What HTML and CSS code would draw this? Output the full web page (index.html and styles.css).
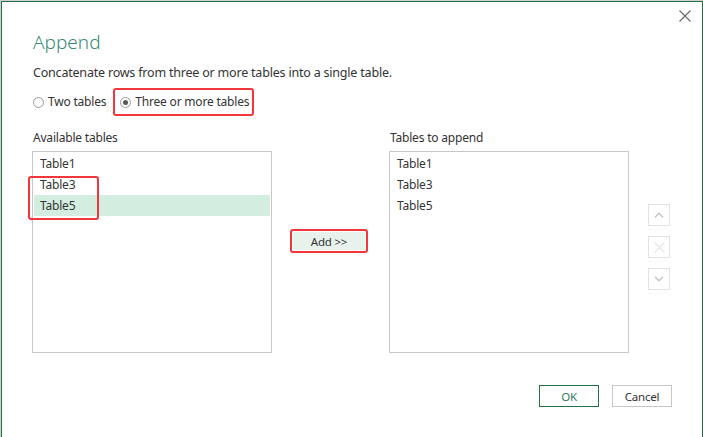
FILE: index.html
```html
<!DOCTYPE html>
<html>
<head>
<meta charset="utf-8">
<link rel="stylesheet" href="styles.css">
</head>
<body>
<div class="dialog">
  <button class="close" aria-label="Close">
    <svg width="12" height="12" viewBox="0 0 12 12"><path d="M0.5 0.5 L11.5 11.5 M11.5 0.5 L0.5 11.5" stroke="#6a6a6a" stroke-width="1.2" fill="none"/></svg>
  </button>
  <h1 class="title">Append</h1>
  <p class="desc">Concatenate rows from three or more tables into a single table.</p>
  <div class="radios">
    <label class="radio"><span class="dot"></span>Two tables</label>
    <label class="radio radio-hl"><span class="dot checked"></span>Three or more tables</label>
  </div>
  <div class="columns">
    <div class="col">
      <div class="label">Available tables</div>
      <div class="list">
        <div class="item">Table1</div>
        <div class="item">Table3</div>
        <div class="item selected">Table5</div>
        <div class="hl-items"></div>
      </div>
    </div>
    <div class="middle">
      <span class="add-hl"><button class="add">Add &gt;&gt;</button></span>
    </div>
    <div class="col">
      <div class="label">Tables to append</div>
      <div class="list">
        <div class="item">Table1</div>
        <div class="item">Table3</div>
        <div class="item">Table5</div>
      </div>
    </div>
    <div class="side">
      <button class="sbtn"><svg width="10" height="6" viewBox="0 0 10 6"><path d="M1 5.2 L5 1.2 L9 5.2" stroke="#c2c2c2" stroke-width="1.4" fill="none"/></svg></button>
      <button class="sbtn"><svg width="11" height="11" viewBox="0 0 11 11"><path d="M0.5 0.5 L10.5 10.5 M10.5 0.5 L0.5 10.5" stroke="#e6e6e6" stroke-width="1.2" fill="none"/></svg></button>
      <button class="sbtn"><svg width="10" height="6" viewBox="0 0 10 6"><path d="M1 0.8 L5 4.8 L9 0.8" stroke="#c2c2c2" stroke-width="1.4" fill="none"/></svg></button>
    </div>
  </div>
  <div class="footer">
    <button class="btn ok">OK</button>
    <button class="btn">Cancel</button>
  </div>
</div>
</body>
</html>
```

FILE: styles.css
```css
html, body {
  margin: 0;
  padding: 0;
  overflow: hidden;
}
body {
  background: #cfcfcf;
  padding: 1px 0 0 1px;
  width: 703px;
  height: 437px;
  box-sizing: border-box;
  font-family: "Noto Sans", "Open Sans", sans-serif;
  font-size: 12px;
  letter-spacing: -0.2px;
  color: #333;
}
.dialog {
  position: relative;
  width: 702px;
  height: 436px;
  box-sizing: border-box;
  background: #fff;
  border: 1px solid #217346;
  border-bottom: 0;
  padding: 0 0 0 30px;
}
.close {
  position: absolute;
  top: 7px;
  right: 10px;
  width: 14px;
  height: 14px;
  padding: 0;
  border: 0;
  background: none;
  display: flex;
  align-items: center;
  justify-content: center;
}
.title {
  margin: 28px 0 0 1px;
  font-size: 19px;
  line-height: 24px;
  font-weight: 300;
  letter-spacing: 0;
  color: #3b8b78;
}
.desc {
  margin: 10px 0 0 1px;
  font-size: 12.5px;
  line-height: 18px;
}
.radios {
  margin-top: 6px;
  display: flex;
  align-items: center;
  gap: 7px;
  height: 28px;
}
.radio {
  display: flex;
  align-items: center;
  gap: 4px;
  line-height: 18px;
  padding-left: 1px;
}
.radio-hl {
  border: 2px solid #f0353b;
  border-radius: 3px;
  height: 24px;
  padding: 0 3px 0 5px;
}
.dot {
  width: 9px;
  height: 9px;
  border: 1px solid #9a9a9a;
  border-radius: 50%;
  box-sizing: content-box;
  display: flex;
  align-items: center;
  justify-content: center;
}
.dot.checked::after {
  content: "";
  width: 5px;
  height: 5px;
  border-radius: 50%;
  background: #5a5a5a;
}
.columns {
  margin-top: 13px;
  display: flex;
}
.col {
  display: flex;
  flex-direction: column;
  width: 240px;
}
.label {
  line-height: 18px;
  padding-left: 1px;
  margin-bottom: 4px;
}
.list {
  position: relative;
  height: 202px;
  border: 1px solid #c6c6c6;
  box-sizing: border-box;
  padding: 1px;
}
.item {
  height: 21px;
  line-height: 21px;
  padding-left: 6px;
}
.item.selected {
  background: #d3eee0;
}
.hl-items {
  position: absolute;
  left: -5px;
  top: 24px;
  width: 71px;
  height: 44px;
  box-sizing: border-box;
  border: 2px solid #f0353b;
  border-radius: 3px;
}
.middle {
  width: 117px;
  display: flex;
  justify-content: flex-start;
  align-items: flex-start;
  padding-top: 100px;
  padding-left: 18px;
  box-sizing: border-box;
}
.add-hl {
  display: inline-flex;
  border: 2px solid #f0353b;
  border-radius: 3px;
  padding: 1px;
}
.add {
  width: 72px;
  height: 18px;
  border: 0;
  background: #e8f2ec;
  font-family: "Noto Sans", "Open Sans", sans-serif;
  font-size: 11.5px;
  letter-spacing: -0.2px;
  color: #333;
  padding: 0;
}
.side {
  margin-left: 19px;
  padding-top: 75px;
  display: flex;
  flex-direction: column;
  gap: 10px;
}
.sbtn {
  width: 22px;
  height: 22px;
  padding: 0;
  border: 1px solid #e2e2e2;
  background: #fff;
  display: flex;
  align-items: center;
  justify-content: center;
}
.footer {
  margin-top: 32px;
  display: flex;
  gap: 13px;
  padding-left: 507px;
}
.btn {
  width: 60px;
  height: 22px;
  padding: 0;
  border: 1px solid #c6c6c6;
  background: #fff;
  font-family: "Noto Sans", "Open Sans", sans-serif;
  font-size: 11.5px;
  letter-spacing: -0.2px;
  color: #333;
}
.btn.ok {
  border-color: #217346;
  color: #2f7d5c;
}
```
